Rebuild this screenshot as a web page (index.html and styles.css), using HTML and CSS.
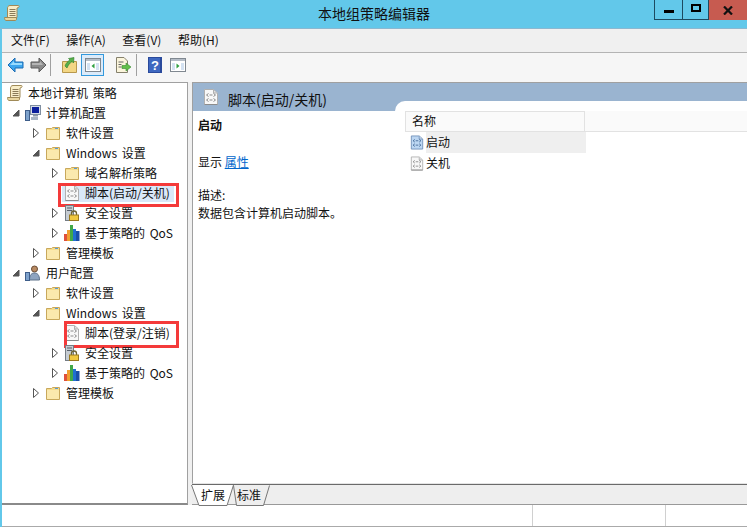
FILE: index.html
```html
<!DOCTYPE html>
<html lang="zh-CN">
<head>
<meta charset="utf-8">
<title>本地组策略编辑器</title>
<link rel="stylesheet" href="styles.css">
</head>
<body>
<svg class="sprite" aria-hidden="true">
  <symbol id="folder" viewBox="0 0 16 16">
    <path d="M1.500 3.500V14.500H14.500V2.500H7.500L6.500 3.500Z" fill="#f6dc8c" stroke="#c8a85c"/>
    <path d="M2 5H14V14H2Z" fill="#fbe9ae"/>
    <path d="M10 3h3v1h-3z" fill="#5b9bd5"/>
  </symbol>
  <symbol id="script" viewBox="0 0 16 16">
    <path d="M1.500 .5H10.500L14.500 4V15.500H1.500Z" fill="#f8f8f8" stroke="#b0b0b0"/>
    <path d="M10.500 1V4H14" fill="#e2e2e2" stroke="#b0b0b0"/>
    <path d="M1.500 15.500H14.500" stroke="#8c8c8c"/>
    <path d="M5.500 4.500L3.500 6L5.500 7.500M10.500 4.500L12.500 6L10.500 7.500M5.500 9.500L3.500 11L5.500 12.500M10.500 9.500L12.500 11L10.500 12.500M6.500 6H9.500M6.500 11H9.500" fill="none" stroke="#8a8a8a"/>
  </symbol>
  <symbol id="script-blue" viewBox="0 0 16 16">
    <path d="M1.500 .5H10.500L14.500 4V15.500H1.500Z" fill="#bcd6f2" stroke="#6f8fb8"/>
    <path d="M10.500 1V4H14" fill="#e4eefa" stroke="#6f8fb8"/>
    <path d="M5.500 4.500L3.500 6L5.500 7.500M10.500 4.500L12.500 6L10.500 7.500M5.500 9.500L3.500 11L5.500 12.500M10.500 9.500L12.500 11L10.500 12.500M6.500 6H9.500M6.500 11H9.500" fill="none" stroke="#456a98"/>
  </symbol>
  <symbol id="scroll" viewBox="0 0 16 16">
    <path d="M4 1.500C4.500 .8 5 .5 6 .5H14.500C15 .5 15.500 1.500 14.500 2.500L13 3V12.500H3.500V3C3.500 2.500 3.700 2 4 1.500Z" fill="#f8edc8" stroke="#a08a58"/>
    <path d="M.5 12.500H12.500V14C12.500 15 12 15.500 11 15.500H2C1 15.500 .5 14 .5 12.500Z" fill="#ead7a0" stroke="#a08a58"/>
    <path d="M5.500 4.500H11.500M5.500 6.500H11.500M5.500 8.500H11.500M5.500 10.500H11.500" stroke="#8a7a58"/>
  </symbol>
  <symbol id="computer" viewBox="0 0 16 16">
    <rect x="5.500" y=".5" width="10" height="9" fill="#d6dde6" stroke="#7f8ea0"/>
    <rect x="7" y="2" width="7" height="6" fill="#0c1f9c"/>
    <path d="M8 10h5v1.500H8z" fill="#8a97a8"/>
    <rect x=".5" y="5.500" width="4" height="10" fill="#7ea2cc" stroke="#3f5e8a"/>
    <path d="M6 12h7v3H6z" fill="#a9b5c4"/>
  </symbol>
  <symbol id="user" viewBox="0 0 16 16">
    <circle cx="9.500" cy="4" r="3" fill="#b88a62" stroke="#6a4c34"/>
    <path d="M4.500 15C4.500 9.500 7 8 9.500 8S14.500 9.500 14.500 15Z" fill="#8ea4c0" stroke="#5d7088"/>
    <rect x=".5" y="7.500" width="4" height="8" fill="#7ea2cc" stroke="#3f5e8a"/>
  </symbol>
  <symbol id="lock" viewBox="0 0 16 16">
    <rect x="1.500" y=".5" width="8" height="15" fill="#c6ccd2" stroke="#757c84"/>
    <path d="M3 3h5M3 5.500h5" stroke="#58606a"/>
    <path d="M7.500 10V8.500a2.500 2.500 0 0 1 5 0V10" fill="none" stroke="#6e6432" stroke-width="1.300"/>
    <rect x="5.500" y="10" width="9" height="5.500" fill="#f0c840" stroke="#9a7a20"/>
  </symbol>
  <symbol id="qos" viewBox="0 0 16 16">
    <rect x="0" y="9" width="3" height="7" fill="#e0503a"/>
    <rect x="3" y="5" width="3" height="11" fill="#f0a030"/>
    <rect x="6" y="0" width="3" height="16" fill="#40a848"/>
    <rect x="9" y="4" width="3" height="12" fill="#2070d0"/>
    <rect x="12" y="6" width="3.500" height="10" fill="#1a4fa8"/>
  </symbol>
  <symbol id="open" viewBox="0 0 8 12"><path d="M1.500 1.500L6.500 6L1.500 10.500Z" fill="#fff" stroke="#555"/></symbol>
  <symbol id="down" viewBox="0 0 8 12"><path d="M7 3V9H1Z" fill="#555" stroke="#555"/></symbol>
</svg>

<div class="window">
  <header class="titlebar">
    <svg class="app-icon"><use href="#scroll"/></svg>
    <h1 class="title">本地组策略编辑器</h1>
    <div class="controls">
      <span class="ctl ctl-min"><i class="glyph-min"></i></span>
      <span class="ctl ctl-max"><i class="glyph-max"></i></span>
      <span class="ctl ctl-close">
        <svg width="10" height="9" viewBox="0 0 10 9"><path d="M1 .5L9 8.500M9 .5L1 8.500" stroke="#111" stroke-width="2.200"/></svg>
      </span>
    </div>
  </header>

  <nav class="menubar">
    <span>文件(F)</span><span>操作(A)</span><span>查看(V)</span><span>帮助(H)</span>
  </nav>

  <div class="toolbar">
    <svg class="tb tb-back" viewBox="0 0 17 16"><path d="M8 1L1 8L8 15V11H16V5H8Z" fill="#3ea6ee" stroke="#1a6cb4"/><path d="M7 4L3 8H15V6H7Z" fill="#9adcff"/></svg>
    <svg class="tb tb-fwd" viewBox="0 0 17 16"><path d="M9 1L16 8L9 15V11H1V5H9Z" fill="#8a8a8a" stroke="#5a5a5a"/><path d="M2 6H10V4L13 8H2Z" fill="#b4b4b4"/></svg>
    <i class="tb-sep sep-a"></i>
    <svg class="tb tb-up" viewBox="0 0 15 16"><path d="M.5 4.500H14.500V15.500H.5Z" fill="#f3d684" stroke="#b8984c"/><path d="M3 9C4 6 6 4 8 3L6.500 1.500L12 .5L11.500 6L10 4.500C8 6 6 8 5 11Z" fill="#58b04a" stroke="#2c7a2a" stroke-width=".6"/></svg>
    <span class="tb-active">
      <svg width="16" height="14" viewBox="0 0 16 14"><rect x=".5" y=".5" width="15" height="13" fill="#fff" stroke="#808890"/><path d="M1 1h14v2H1z" fill="#b4bcc6"/><path d="M2 5h3v7H2zM11 5h3v7h-3z" fill="#d4e2f2"/><path d="M9.500 5.500v5L6.500 8z" fill="#2fa040"/></svg>
    </span>
    <svg class="tb tb-export" viewBox="0 0 17 16"><path d="M1.500 .5H9L12.500 4V15.500H1.500Z" fill="#fbf5dc" stroke="#85806c"/><path d="M3.500 5h5M3.500 7.500h3M3.500 10h3" stroke="#666"/><path d="M7 8.500h4V6l5 4-5 4v-2.500H7Z" fill="#62c04a" stroke="#3a8a32" stroke-width=".6"/></svg>
    <i class="tb-sep sep-b"></i>
    <svg class="tb tb-help" viewBox="0 0 14 16"><rect width="14" height="16" fill="#2a4a9c"/><rect x="1" y="1" width="11" height="14" fill="#3f68c0"/><text x="7" y="13" class="help-mark">?</text></svg>
    <svg class="tb tb-view" viewBox="0 0 16 14"><rect x=".5" y=".5" width="15" height="13" fill="#fff" stroke="#808890"/><path d="M1 1h14v2H1z" fill="#b4bcc6"/><path d="M2 5h3v7H2zM11 5h3v7h-3z" fill="#d4e2f2"/><path d="M6.500 5.500v5L9.500 8z" fill="#2fa040"/></svg>
  </div>

  <main class="main">
    <aside class="tree">
      <div class="row lv0"><svg class="ico"><use href="#scroll"/></svg><span>本地计算机 策略</span></div>
      <div class="row lv1"><svg class="arr"><use href="#down"/></svg><svg class="ico"><use href="#computer"/></svg><span>计算机配置</span></div>
      <div class="row lv2"><svg class="arr"><use href="#open"/></svg><svg class="ico"><use href="#folder"/></svg><span>软件设置</span></div>
      <div class="row lv2"><svg class="arr"><use href="#down"/></svg><svg class="ico"><use href="#folder"/></svg><span>Windows 设置</span></div>
      <div class="row lv3"><svg class="arr"><use href="#open"/></svg><svg class="ico"><use href="#folder"/></svg><span>域名解析策略</span></div>
      <div class="row lv3 noarr selected"><svg class="ico"><use href="#script"/></svg><span>脚本(启动/关机)</span><i class="mark mark-a"></i></div>
      <div class="row lv3"><svg class="arr"><use href="#open"/></svg><svg class="ico"><use href="#lock"/></svg><span>安全设置</span></div>
      <div class="row lv3"><svg class="arr"><use href="#open"/></svg><svg class="ico"><use href="#qos"/></svg><span>基于策略的 QoS</span></div>
      <div class="row lv2"><svg class="arr"><use href="#open"/></svg><svg class="ico"><use href="#folder"/></svg><span>管理模板</span></div>
      <div class="row lv1"><svg class="arr"><use href="#down"/></svg><svg class="ico"><use href="#user"/></svg><span>用户配置</span></div>
      <div class="row lv2"><svg class="arr"><use href="#open"/></svg><svg class="ico"><use href="#folder"/></svg><span>软件设置</span></div>
      <div class="row lv2"><svg class="arr"><use href="#down"/></svg><svg class="ico"><use href="#folder"/></svg><span>Windows 设置</span></div>
      <div class="row lv3 noarr"><svg class="ico"><use href="#script"/></svg><span>脚本(登录/注销)</span><i class="mark mark-b"></i></div>
      <div class="row lv3"><svg class="arr"><use href="#open"/></svg><svg class="ico"><use href="#lock"/></svg><span>安全设置</span></div>
      <div class="row lv3"><svg class="arr"><use href="#open"/></svg><svg class="ico"><use href="#qos"/></svg><span>基于策略的 QoS</span></div>
      <div class="row lv2"><svg class="arr"><use href="#open"/></svg><svg class="ico"><use href="#folder"/></svg><span>管理模板</span></div>
    </aside>

    <section class="pane">
      <div class="pane-head">
        <svg class="head-ico"><use href="#script"/></svg>
        <h2 class="head-title">脚本(启动/关机)</h2>
      </div>
      <div class="pane-body">
        <div class="desc">
          <p class="desc-name">启动</p>
          <p class="desc-show">显示 <a class="link">属性</a></p>
          <p class="desc-label">描述:</p>
          <p>数据包含计算机启动脚本。</p>
        </div>
        <div class="list">
          <div class="list-head"><span class="col-name">名称</span></div>
          <div class="list-row"><svg class="list-ico"><use href="#script-blue"/></svg><span class="cell cell-hi">启动</span></div>
          <div class="list-row"><svg class="list-ico"><use href="#script"/></svg><span class="cell">关机</span></div>
        </div>
      </div>
      <div class="tabs">
        <svg class="tab-shape" width="82" height="21" viewBox="0 0 82 21">
          <path d="M42.500 0.500L45.500 20.500H72.500L78.500 .5" fill="#eee" stroke="#777"/>
          <path d="M.5 0L8 20.500H36L42.500 0Z" fill="#fff"/>
          <path d="M.5 0L8 20.500H36L42.500 0" fill="none" stroke="#777"/>
        </svg>
        <span class="tab">扩展</span><span class="tab">标准</span>
      </div>
    </section>
  </main>

  <footer class="status">
    <span class="st st-main"></span><span class="st st-mid"></span><span class="st st-end"></span>
  </footer>
</div>
</body>
</html>
```

FILE: styles.css
```css
* { box-sizing: border-box; }
html, body { margin: 0; padding: 0; height: 100%; overflow: hidden; }
body {
  background: #f0f0f0;
  color: #111;
  font: 12px/20px "Noto Sans CJK SC", "Noto Sans", sans-serif;
}
.sprite { position: absolute; width: 0; height: 0; }
.window {
  display: flex;
  flex-direction: column;
  height: 527px;
  border-left: 2px solid #62c8ea;
}

.titlebar {
  height: 29px;
  margin-left: -2px;
  background: #62c8ea;
  border-bottom: 1px solid #8cb8d0;
  display: flex;
  justify-content: space-between;
  position: relative;
  flex: none;
}
.app-icon { width: 16px; height: 16px; margin: 5px 0 0 4px; }
.title {
  position: absolute;
  left: 0; right: 0; top: 3px;
  margin: 0;
  padding-left: 1px;
  text-align: center;
  font-size: 14px;
  font-weight: 400;
  line-height: 20px;
  color: #111;
}
.controls { display: flex; height: 20px; align-items: stretch; }
.ctl {
  display: flex;
  align-items: center;
  justify-content: center;
  border: 1px solid #1d4a60;
  border-top: 0;
  border-left-width: 0;
}
.ctl-min { width: 29px; border-left-width: 1px; }
.ctl-max { width: 26px; }
.ctl-close { width: 38px; background: #c75b50; border: 0; }
.glyph-min { width: 10px; height: 3px; background: #000; margin-top: 4px; }
.glyph-max { width: 10px; height: 8px; border: 2px solid #000; margin-top: -3px; }

.menubar {
  height: 24px;
  flex: none;
  display: flex;
  gap: 16.6px;
  padding: 0 0 0 9px;
  background: #f0f0f0;
  border-bottom: 1px solid #b4b4b4;
  line-height: 22px;
}

.toolbar {
  height: 29px;
  flex: none;
  display: flex;
  align-items: center;
  background: #f6f6f6;
  padding-bottom: 6px;
  padding-top: 1px;
}
.tb { display: block; flex: none; }
.tb-back { width: 17px; height: 16px; margin-left: 5px; }
.tb-fwd { width: 17px; height: 16px; margin-left: 6px; }
.tb-sep { width: 1px; height: 22px; background: #a0a0a0; flex: none; }
.sep-a { margin-left: 3px; }
.tb-up { width: 15px; height: 16px; margin-left: 11px; }
.tb-active {
  width: 23px;
  height: 22px;
  margin-left: 4px;
  background: #dcebfa;
  border: 1px solid #3399dd;
  display: flex;
  align-items: center;
  justify-content: center;
  flex: none;
}
.tb-export { width: 17px; height: 16px; margin-left: 11px; }
.sep-b { margin-left: 4px; }
.tb-help { width: 14px; height: 16px; margin-left: 11px; }
.help-mark { font: 700 13px "Liberation Sans", sans-serif; fill: #fff; text-anchor: middle; }
.tb-view { width: 16px; height: 14px; margin-left: 8px; }

.main { flex: 1; min-height: 0; display: flex; gap: 4px; }

.tree {
  width: 186px;
  flex: none;
  background: #fff;
  border-top: 1px solid #a0a0a0;
  border-right: 1px solid #a0a0a0;
  border-bottom: 2px solid #8a8a8a;
  word-spacing: 2px;
}
.row { height: 20px; display: flex; align-items: center; position: relative; white-space: nowrap; }
.row span { line-height: 20px; }
.ico { width: 16px; height: 16px; flex: none; margin-right: 5px; }
.arr { width: 8px; height: 12px; flex: none; margin-right: 5px; }
.lv0 { padding-left: 5px; }
.lv1 { padding-left: 10px; }
.lv2 { padding-left: 30px; }
.lv3 { padding-left: 49px; }
.noarr { padding-left: 62px; }
.selected::before {
  content: "";
  position: absolute;
  left: 60px; top: 1px; bottom: 1px;
  width: 112px;
  background: #d9e8f8;
}
.selected > * { position: relative; }
.mark { position: absolute; border: 3px solid #f43a3a; }
.selected > .mark { position: absolute; }
.mark-a { left: 56px; top: 0; width: 121px; height: 24px; }
.mark-b { left: 62px; top: -2px; width: 115px; height: 27px; }

.pane { flex: 1; min-width: 0; display: flex; flex-direction: column; }
.pane-head {
  height: 29px;
  flex: none;
  background: #9ab4d0;
  border-top: 1px solid #a0a0a0;
  border-left: 1px solid #a0a0a0;
  display: flex;
  align-items: center;
  padding: 3px 0 0 10px;
}
.head-ico { width: 16px; height: 16px; margin: -3px 9px 0 0; }
.head-title { margin: 0; font-size: 14px; font-weight: 400; line-height: 20px; color: #111; }
.pane-body {
  flex: 1;
  min-height: 0;
  display: flex;
  background: #fff;
  border-left: 1px solid #a0a0a0;
  border-bottom: 1px solid #e4e4e4;
}
.desc { width: 202px; flex: none; padding: 5px 0 0 5px; line-height: 18px; }
.desc p { margin: 0; }
.desc-name { font-weight: 700; }
.desc-show { padding-top: 19px; }
.desc-label { padding-top: 15px; }
.link { color: #0066cc; text-decoration: underline; }
.list {
  flex: 1;
  margin-top: -10px;
  background: #fff;
  border-top-left-radius: 10px;
  padding-top: 10px;
}
.list-head {
  height: 21px;
  margin-left: 10px;
  background: #fafafa;
  border-bottom: 1px solid #e2e2e2;
}
.col-name {
  display: block;
  width: 180px;
  height: 20px;
  padding-left: 6px;
  border: 1px solid #e2e2e2;
  border-bottom: 0;
  line-height: 17px;
}
.list-row { height: 21px; display: flex; align-items: center; padding-left: 15px; }
.list-ico { width: 14px; height: 15px; margin-right: 2px; flex: none; }
.cell { width: 160px; height: 21px; line-height: 19px; }
.cell-hi { background: #efefef; }

.tabs {
  height: 21px;
  flex: none;
  background: #eee;
  border-top: 1px solid #6a6a6a;
  border-bottom: 1px solid #999;
  position: relative;
  display: flex;
  padding-left: 9px;
}
.tab-shape { position: absolute; left: -1px; top: 0; }
.tab { position: relative; line-height: 20px; width: 24px; margin-right: 12px; }

.status {
  height: 22px;
  flex: none;
  background: #fff;
  border-bottom: 1px solid #aaa;
  display: flex;
}
.st { display: block; }
.st-main { width: 531px; border-right: 1px solid #d0d0d0; }
.st-mid { width: 133px; border-right: 1px solid #d0d0d0; }
.st-end { flex: 1; }
```
